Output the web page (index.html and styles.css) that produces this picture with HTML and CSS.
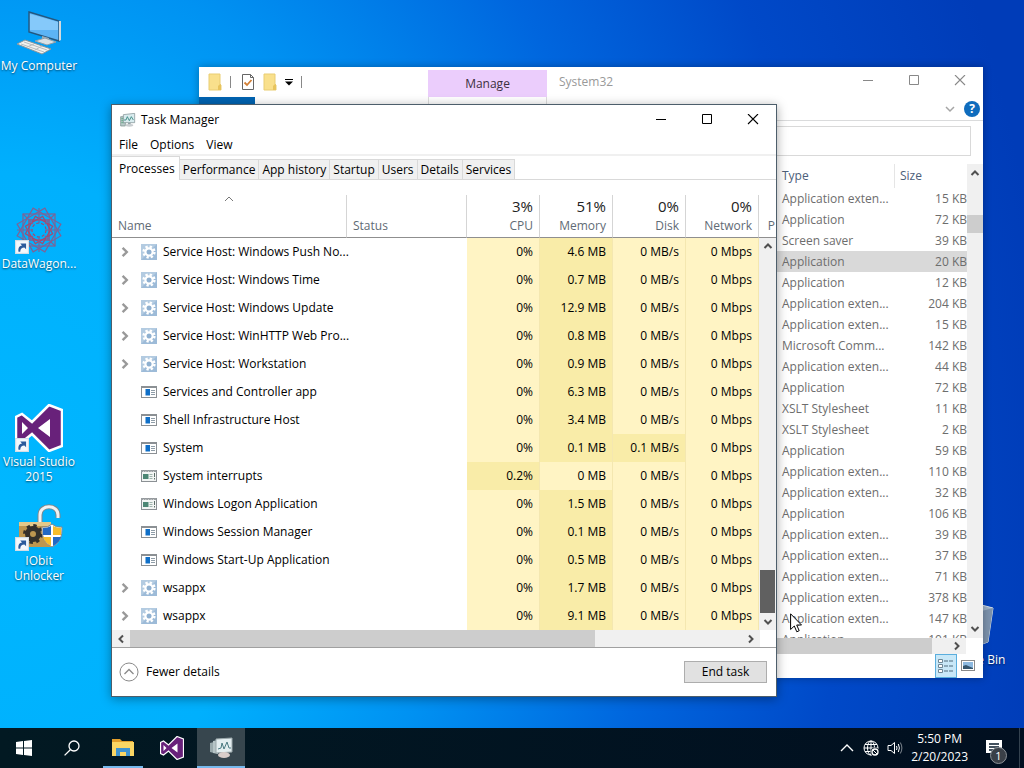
FILE: index.html
```html
<!DOCTYPE html>
<html lang="en">

<head>
    <meta charset="UTF-8">
    <meta name="viewport" content="width=device-width, initial-scale=1.0">
    <title>Desktop</title>
    <link rel="stylesheet" href="styles.css">
</head>

<body>
    <!-- shared icons -->
    <svg class="defs" aria-hidden="true">
        <symbol id="arrow-up" viewBox="0 0 10 10"><path d="M1.500 7L5 3.500L8.500 7" fill="none" stroke="currentColor" stroke-width="2"/></symbol>
        <symbol id="arrow-down" viewBox="0 0 10 10"><path d="M1.500 3L5 6.500L8.500 3" fill="none" stroke="currentColor" stroke-width="2"/></symbol>
        <symbol id="arrow-left" viewBox="0 0 10 10"><path d="M7 1.500L3.500 5L7 8.500" fill="none" stroke="currentColor" stroke-width="2"/></symbol>
        <symbol id="arrow-right" viewBox="0 0 10 10"><path d="M3 1.500L6.500 5L3 8.500" fill="none" stroke="currentColor" stroke-width="2"/></symbol>
        <symbol id="minimize" viewBox="0 0 12 12"><path d="M1 5.500H11" stroke="currentColor"/></symbol>
        <symbol id="maximize" viewBox="0 0 12 12"><path d="M1.500 .5H10.500V9.500H1.500Z" fill="none" stroke="currentColor"/></symbol>
        <symbol id="close" viewBox="0 0 12 12"><path d="M1 0L11 10M11 0L1 10" stroke="currentColor" stroke-width="1.100"/></symbol>
        <symbol id="gear" viewBox="0 0 16 16">
            <rect width="16" height="16" fill="#9dbbd8"/>
            <path d="M0 0H16L0 16Z" fill="#b3cbe1"/>
            <circle cx="8" cy="8" r="5.400" fill="none" stroke="#fff" stroke-width="2.400" stroke-dasharray="2.300 1.940"/>
            <circle cx="8" cy="8" r="3.600" fill="none" stroke="#fff" stroke-width="2.200"/>
            <circle cx="8" cy="8" r="2.300" fill="#8fb0d0"/>
        </symbol>
        <symbol id="app" viewBox="0 0 16 16">
            <rect x=".5" y="2.500" width="15" height="11" fill="#fff" stroke="#8b9094"/>
            <path d="M0 3H16" stroke="#8b9094" stroke-width="2"/>
            <rect x="4.500" y="5" width="4.500" height="6.500" fill="#0f6fc8"/>
            <path d="M10 6.500H14M10 8.500H14M10 10.500H14" stroke="#8f9da8"/>
        </symbol>
        <symbol id="console" viewBox="0 0 16 16">
            <rect x=".5" y="2.500" width="15" height="11" fill="#f3f5f4" stroke="#8b9094"/>
            <path d="M0 3H16" stroke="#9a9fa2" stroke-width="2" stroke-dasharray="2 .6"/>
            <rect x="2" y="6" width="5.500" height="5" fill="#4c8674"/>
            <path d="M8.500 6.500H11.500M8.500 8.500H11.500M8.500 10.500H11.500" stroke="#9fb5ad"/>
            <path d="M13.500 5V9M13.500 10V11.500" stroke="#5c6e68"/>
        </symbol>
        <symbol id="shortcut" viewBox="0 0 12 12">
            <rect x=".5" y=".5" width="11" height="11" fill="#f4f8fc" stroke="#d3dde6"/>
            <path d="M3 10C2.500 6.500 4 5 6 4.800L4.500 3H9.500V8L8 6.500C6 6.500 4.500 7.500 4.500 10Z" fill="#2b5a9b"/>
        </symbol>
        <symbol id="vs" viewBox="0 0 48 48">
            <path d="M34 1L47 6V42L34 47L17 30L7 38L1 35V13L7 10L17 18Z" fill="#68217a" stroke="#fff" stroke-width="2.500"/>
            <path d="M35 15V33L23 24ZM7 18V30L13 24Z" fill="#fff"/>
        </symbol>
        <symbol id="monitor" viewBox="0 0 24 22">
            <path d="M1 6H8V20H1Z" fill="#b9cbca" stroke="#6f8583"/>
            <path d="M2 9H6M2 12H6M2 15H6" stroke="#3fa06a"/>
            <path d="M5 3L22 1V15H5Z" fill="#d9ecef" stroke="#78898d"/>
            <path d="M6 11L9 11L11 6L14 12L17 6L20 11" fill="none" stroke="#35877f" stroke-width="1.300"/>
            <path d="M12 15H16V18H12Z" fill="#94a3a6"/>
            <ellipse cx="14" cy="19" rx="6" ry="2" fill="#c8cdd0"/>
        </symbol>
        <symbol id="folder" viewBox="0 0 14 18">
            <path d="M1 1H12V11L13 12V17H1Z" fill="#f9e08c" stroke="#e9cd72"/>
            <path d="M12 11L10 13V17H13V12Z" fill="#e8c45d"/>
        </symbol>
    </svg>

    <main class="desktop">
        <a class="shortcut row-1" href="#">
            <svg class="shortcut-icon" viewBox="0 0 48 48">
                <path d="M14 4L44 13V33L14 24Z" fill="#5cb4f5" stroke="#24577f" stroke-width="1.400"/>
                <path d="M15 6L43 14V22L15 22Z" fill="#85c9fa"/>
                <path d="M44 13L46 13V32L44 33Z" fill="#d3dade"/>
                <path d="M27 28L34 30V34L27 33Z" fill="#9fb0ba"/>
                <path d="M20 33L30 30L41 34L32 37Z" fill="#d9e1e6" stroke="#8fa0aa"/>
                <path d="M2 36L10 32L36 41L27 46Z" fill="#f1f1ee" stroke="#8c969c"/>
                <path d="M6 36L29 44M9 34L32 42M12 39L19 36M20 42L27 38" stroke="#b7bcbf"/>
            </svg>
            <span>My Computer</span>
        </a>
        <a class="shortcut row-3" href="#">
            <svg class="shortcut-icon" viewBox="0 0 48 48">
                <g fill="none" stroke="#7d6396" stroke-width="1.200">
                    <rect x="8" y="8" width="32" height="32"/>
                    <rect x="8" y="8" width="32" height="32" transform="rotate(30 24 24)"/>
                    <rect x="8" y="8" width="32" height="32" transform="rotate(60 24 24)"/>
                    <rect x="14" y="14" width="20" height="20" stroke="#a34a70"/>
                    <rect x="14" y="14" width="20" height="20" transform="rotate(30 24 24)" stroke="#a34a70"/>
                    <rect x="14" y="14" width="20" height="20" transform="rotate(60 24 24)" stroke="#a34a70"/>
                    <circle cx="24" cy="24" r="7" stroke="#a34a70" stroke-dasharray="3 2"/>
                    <path d="M24 2V17M24 31V46M2 24H17M31 24H46M8 8L18 18M40 8L30 18M8 40L18 30M40 40L30 30"/>
                </g>
                <use href="#shortcut" x="0" y="34" width="14" height="14"/>
            </svg>
            <span>DataWagon...</span>
        </a>
        <a class="shortcut row-5" href="#">
            <svg class="shortcut-icon" viewBox="0 0 48 48">
                <use href="#vs" width="48" height="48"/>
                <use href="#shortcut" x="0" y="34" width="14" height="14"/>
            </svg>
            <span>Visual Studio 2015</span>
        </a>
        <a class="shortcut row-6" href="#">
            <svg class="shortcut-icon" viewBox="0 0 48 48">
                <path d="M25 20V12C25 1 43 1 43 12V15" fill="none" stroke="#7f8589" stroke-width="5"/>
                <path d="M25 20V12C25 1 43 1 43 12V15" fill="none" stroke="#f0f2f3" stroke-width="3"/>
                <rect x="4" y="19" width="32" height="25" fill="#bd9650"/>
                <path d="M4 19H36V23H4Z" fill="#e4c98a"/>
                <circle cx="18" cy="31" r="8.500" fill="none" stroke="#34302b" stroke-width="3" stroke-dasharray="3.340 3.340"/>
                <circle cx="18" cy="31" r="5.500" fill="none" stroke="#34302b" stroke-width="5"/>
                <path d="M27 24Q33 25 37 21Q41 25 47 24Q48 39 37 44Q26 39 27 24Z" fill="#fff" stroke="#888"/>
                <path d="M28 25Q33 25 36 23V32H28ZM38 34H46Q44 40 38 43Z" fill="#2369c4"/>
                <path d="M38 23Q42 25 46 25V32H38ZM28 34H36V43Q30 40 28 34Z" fill="#f6bd2c"/>
                <use href="#shortcut" x="0" y="34" width="14" height="14"/>
            </svg>
            <span>IObit Unlocker</span>
        </a>
        <a class="shortcut row-7 last" href="#">
            <svg class="shortcut-icon" viewBox="0 0 48 48">
                <path d="M6 5L24 1L43 6L38 40L27 44L11 40Z" fill="#9fb3c8" stroke="#d5dfe8"/>
                <path d="M28 10L43 6L38 40L27 44Z" fill="#7d93ad"/>
            </svg>
            <span>Recycle Bin</span>
        </a>
    </main>

    <section class="window explorer">
        <header class="explorer-title">
            <div class="quick">
                <svg class="icon-14" viewBox="0 0 14 18"><use href="#folder"/></svg>
                <i></i>
                <svg class="icon-14 gap" viewBox="0 0 14 18">
                    <path d="M1.500 1.500H9.500L12.500 4.500V16.500H1.500Z" fill="#fff" stroke="#666"/>
                    <path d="M9.500 1.500V4.500H12.500" fill="none" stroke="#666"/>
                    <path d="M3.500 9.500L6 12L10.500 7" fill="none" stroke="#d27f35" stroke-width="1.800"/>
                </svg>
                <svg class="icon-14 gap" viewBox="0 0 14 18"><use href="#folder"/></svg>
                <svg class="icon-8 gap" viewBox="0 0 8 8"><path d="M0 1.500H8" stroke="#000"/><path d="M0 3.500H8L4 7.500Z"/></svg>
                <i></i>
            </div>
            <div class="manage">Manage</div>
            <h2>System32</h2>
            <div class="controls">
                <button aria-label="Minimize"><svg><use href="#minimize"/></svg></button>
                <button aria-label="Maximize"><svg><use href="#maximize"/></svg></button>
                <button aria-label="Close"><svg><use href="#close"/></svg></button>
            </div>
        </header>
        <div class="ribbon">
            <div class="file-tab"></div>
            <div class="manage-tab"></div>
            <svg class="icon-10" viewBox="0 0 10 10"><path d="M1 3L5 7L9 3" fill="none" stroke="#a5a5a5" stroke-width="1.500"/></svg>
            <button class="help" aria-label="Help">?</button>
        </div>
        <div class="address"><input type="text" aria-label="Search"></div>
        <div class="listing">
            <div class="files">
                <table>
                    <thead>
                        <tr><th class="col-rest"></th><th class="col-type">Type</th><th class="col-size">Size</th></tr>
                    </thead>
                    <tbody>
                        <tr><td></td><td>Application exten...</td><td>15 KB</td></tr>
                        <tr><td></td><td>Application</td><td>72 KB</td></tr>
                        <tr><td></td><td>Screen saver</td><td>39 KB</td></tr>
                        <tr class="selected"><td></td><td>Application</td><td>20 KB</td></tr>
                        <tr><td></td><td>Application</td><td>12 KB</td></tr>
                        <tr><td></td><td>Application exten...</td><td>204 KB</td></tr>
                        <tr><td></td><td>Application exten...</td><td>15 KB</td></tr>
                        <tr><td></td><td>Microsoft Comm...</td><td>142 KB</td></tr>
                        <tr><td></td><td>Application exten...</td><td>44 KB</td></tr>
                        <tr><td></td><td>Application</td><td>72 KB</td></tr>
                        <tr><td></td><td>XSLT Stylesheet</td><td>11 KB</td></tr>
                        <tr><td></td><td>XSLT Stylesheet</td><td>2 KB</td></tr>
                        <tr><td></td><td>Application</td><td>59 KB</td></tr>
                        <tr><td></td><td>Application exten...</td><td>110 KB</td></tr>
                        <tr><td></td><td>Application exten...</td><td>32 KB</td></tr>
                        <tr><td></td><td>Application</td><td>106 KB</td></tr>
                        <tr><td></td><td>Application exten...</td><td>39 KB</td></tr>
                        <tr><td></td><td>Application exten...</td><td>37 KB</td></tr>
                        <tr><td></td><td>Application exten...</td><td>71 KB</td></tr>
                        <tr><td></td><td>Application exten...</td><td>378 KB</td></tr>
                        <tr><td></td><td>Application exten...</td><td>147 KB</td></tr>
                        <tr><td></td><td>Application</td><td>101 KB</td></tr>
                    </tbody>
                </table>
            </div>
            <div class="vscroll">
                <svg class="icon-10"><use href="#arrow-up"/></svg>
                <div class="track"><div class="thumb"></div></div>
                <svg class="icon-10"><use href="#arrow-down"/></svg>
            </div>
        </div>
        <div class="hscroll">
            <div class="thumb"></div>
            <svg class="icon-10"><use href="#arrow-right"/></svg>
        </div>
        <footer class="views">
            <button class="active" aria-label="Details view">
                <svg viewBox="0 0 16 16"><path d="M.5 1.500H4.500V4.500H.5ZM.5 6.500H4.500V9.500H.5ZM.5 11.500H4.500V14.500H.5Z" fill="#fff" stroke="#6f8796"/><path d="M6 3H10M11 3H15M6 8H10M11 8H15M6 13H10M11 13H15" stroke="#4f6b7c"/></svg>
            </button>
            <button aria-label="Large icons view">
                <svg viewBox="0 0 16 16"><rect x="1.500" y="2.500" width="13" height="10" fill="#fff" stroke="#8a8a8a"/><rect x="3" y="4" width="10" height="7" fill="#8db9e0"/><path d="M3 11V8L6 7L13 10V11Z" fill="#35566f"/></svg>
            </button>
        </footer>
    </section>

    <section class="window task-manager">
        <header class="task-title">
            <svg class="icon-16" viewBox="0 0 24 22"><use href="#monitor"/></svg>
            <h1>Task Manager</h1>
            <div class="controls">
                <button aria-label="Minimize"><svg><use href="#minimize"/></svg></button>
                <button aria-label="Maximize"><svg><use href="#maximize"/></svg></button>
                <button aria-label="Close"><svg><use href="#close"/></svg></button>
            </div>
        </header>
        <nav class="menu">
            <button>File</button>
            <button>Options</button>
            <button>View</button>
        </nav>
        <div class="tabs">
            <button class="current">Processes</button>
            <button>Performance</button>
            <button>App history</button>
            <button>Startup</button>
            <button>Users</button>
            <button>Details</button>
            <button>Services</button>
        </div>
        <table class="processes">
            <thead>
                <tr>
                    <th class="col-name"><svg class="sort" viewBox="0 0 10 6"><path d="M1 5L5 1L9 5" fill="none" stroke="#777"/></svg>Name</th>
                    <th class="col-status">Status</th>
                    <th class="col-value"><b>3%</b>CPU</th>
                    <th class="col-value"><b>51%</b>Memory</th>
                    <th class="col-value"><b>0%</b>Disk</th>
                    <th class="col-value"><b>0%</b>Network</th>
                    <th class="col-scroll">P</th>
                </tr>
            </thead>
            <tbody>
                <tr>
                    <td><div class="name"><svg class="expand"><use href="#arrow-right"/></svg><svg class="icon-16"><use href="#gear"/></svg>Service Host: Windows Push No...</div></td>
                    <td></td><td>0%</td><td class="warm">4.6 MB</td><td>0 MB/s</td><td>0 Mbps</td>
                    <td class="scroll-cell" rowspan="14">
                        <div class="vscroll">
                            <svg class="icon-10"><use href="#arrow-up"/></svg>
                            <div class="track"><div class="thumb"></div></div>
                            <svg class="icon-10"><use href="#arrow-down"/></svg>
                        </div>
                    </td>
                </tr>
                <tr>
                    <td><div class="name"><svg class="expand"><use href="#arrow-right"/></svg><svg class="icon-16"><use href="#gear"/></svg>Service Host: Windows Time</div></td>
                    <td></td><td>0%</td><td class="warm">0.7 MB</td><td>0 MB/s</td><td>0 Mbps</td>
                </tr>
                <tr>
                    <td><div class="name"><svg class="expand"><use href="#arrow-right"/></svg><svg class="icon-16"><use href="#gear"/></svg>Service Host: Windows Update</div></td>
                    <td></td><td>0%</td><td class="warm">12.9 MB</td><td>0 MB/s</td><td>0 Mbps</td>
                </tr>
                <tr>
                    <td><div class="name"><svg class="expand"><use href="#arrow-right"/></svg><svg class="icon-16"><use href="#gear"/></svg>Service Host: WinHTTP Web Pro...</div></td>
                    <td></td><td>0%</td><td class="warm">0.8 MB</td><td>0 MB/s</td><td>0 Mbps</td>
                </tr>
                <tr>
                    <td><div class="name"><svg class="expand"><use href="#arrow-right"/></svg><svg class="icon-16"><use href="#gear"/></svg>Service Host: Workstation</div></td>
                    <td></td><td>0%</td><td class="warm">0.9 MB</td><td>0 MB/s</td><td>0 Mbps</td>
                </tr>
                <tr>
                    <td><div class="name"><svg class="expand"></svg><svg class="icon-16"><use href="#app"/></svg>Services and Controller app</div></td>
                    <td></td><td>0%</td><td class="warm">6.3 MB</td><td>0 MB/s</td><td>0 Mbps</td>
                </tr>
                <tr>
                    <td><div class="name"><svg class="expand"></svg><svg class="icon-16"><use href="#app"/></svg>Shell Infrastructure Host</div></td>
                    <td></td><td>0%</td><td class="warm">3.4 MB</td><td>0 MB/s</td><td>0 Mbps</td>
                </tr>
                <tr>
                    <td><div class="name"><svg class="expand"></svg><svg class="icon-16"><use href="#app"/></svg>System</div></td>
                    <td></td><td>0%</td><td class="warm">0.1 MB</td><td class="warm">0.1 MB/s</td><td>0 Mbps</td>
                </tr>
                <tr>
                    <td><div class="name"><svg class="expand"></svg><svg class="icon-16"><use href="#console"/></svg>System interrupts</div></td>
                    <td></td><td class="warm">0.2%</td><td>0 MB</td><td>0 MB/s</td><td>0 Mbps</td>
                </tr>
                <tr>
                    <td><div class="name"><svg class="expand"></svg><svg class="icon-16"><use href="#console"/></svg>Windows Logon Application</div></td>
                    <td></td><td>0%</td><td class="warm">1.5 MB</td><td>0 MB/s</td><td>0 Mbps</td>
                </tr>
                <tr>
                    <td><div class="name"><svg class="expand"></svg><svg class="icon-16"><use href="#app"/></svg>Windows Session Manager</div></td>
                    <td></td><td>0%</td><td class="warm">0.1 MB</td><td>0 MB/s</td><td>0 Mbps</td>
                </tr>
                <tr>
                    <td><div class="name"><svg class="expand"></svg><svg class="icon-16"><use href="#app"/></svg>Windows Start-Up Application</div></td>
                    <td></td><td>0%</td><td class="warm">0.5 MB</td><td>0 MB/s</td><td>0 Mbps</td>
                </tr>
                <tr>
                    <td><div class="name"><svg class="expand"><use href="#arrow-right"/></svg><svg class="icon-16"><use href="#gear"/></svg>wsappx</div></td>
                    <td></td><td>0%</td><td class="warm">1.7 MB</td><td>0 MB/s</td><td>0 Mbps</td>
                </tr>
                <tr>
                    <td><div class="name"><svg class="expand"><use href="#arrow-right"/></svg><svg class="icon-16"><use href="#gear"/></svg>wsappx</div></td>
                    <td></td><td>0%</td><td class="warm">9.1 MB</td><td>0 MB/s</td><td>0 Mbps</td>
                </tr>
            </tbody>
        </table>
        <div class="hscroll">
            <svg class="icon-10"><use href="#arrow-left"/></svg>
            <div class="track"><div class="thumb"></div></div>
            <svg class="icon-10"><use href="#arrow-right"/></svg>
        </div>
        <footer class="task-footer">
            <button class="fewer">
                <svg viewBox="0 0 20 20"><circle cx="10" cy="10" r="9" fill="none" stroke="#8a8a8a"/><path d="M5.500 12L10 7.500L14.500 12" fill="none" stroke="#8a8a8a" stroke-width="1.300"/></svg>
                Fewer details
            </button>
            <button class="end-task">End task</button>
        </footer>
    </section>

    <footer class="taskbar">
        <button aria-label="Start"><svg class="icon-16" viewBox="0 0 16 16"><path d="M0 2L7 1V7.500H0ZM8 1L16 0V7.500H8ZM0 8.500H7V15L0 14ZM8 8.500H16V16L8 15Z" fill="#fff"/></svg></button>
        <button aria-label="Search"><svg class="icon-16" viewBox="0 0 16 16"><circle cx="10" cy="6" r="5" fill="none" stroke="#fff" stroke-width="1.300"/><path d="M6.300 9.700L.6 15.400" stroke="#fff" stroke-width="1.300"/></svg></button>
        <div class="apps">
            <button class="running" aria-label="File Explorer"><svg class="icon-24" viewBox="0 0 24 24"><path d="M1 3H9L11 5H22V8H1Z" fill="#e39f2b"/><path d="M1 6H23V20H1Z" fill="#fbd663"/><path d="M5 20V12H19V20H15V16H9V20Z" fill="#3f93cf"/></svg></button>
            <button aria-label="Visual Studio"><svg class="icon-24" viewBox="0 0 48 48"><use href="#vs"/></svg></button>
            <button class="running focused" aria-label="Task Manager"><svg class="icon-24" viewBox="0 0 24 24"><path d="M1 7L5 6V17L1 16Z" fill="#99a9ac"/><path d="M4 5L9 4V18L4 17Z" fill="#b6c4c6"/><path d="M7 3L23 2V16L7 17Z" fill="#e4eef0" stroke="#9aa7aa"/><path d="M9 13L12 12L13 7L15 13L18 6L20 12H22" fill="none" stroke="#4c7b82"/><ellipse cx="15" cy="19" rx="6" ry="3" fill="#d9cdca"/></svg></button>
        </div>
        <div class="tray">
            <svg class="icon-16" viewBox="0 0 16 16"><path d="M2 11L8 5L14 11" fill="none" stroke="#fff" stroke-width="1.400"/></svg>
            <svg class="icon-16" viewBox="0 0 16 16"><g fill="none" stroke="#fff"><circle cx="8" cy="8" r="7"/><ellipse cx="8" cy="8" rx="3.500" ry="7"/><path d="M8 1V15M1 8H15M2 4.500H14M2 11.500H14"/></g><circle cx="12" cy="12" r="4.500" fill="#020f1d"/><circle cx="12" cy="12" r="3" fill="none" stroke="#fff" stroke-width="1.300"/><path d="M10 10L14 14" stroke="#fff"/></svg>
            <svg class="icon-16" viewBox="0 0 16 16"><g fill="none" stroke="#fff"><path d="M1 5.500H4L7.500 2.500V13.500L4 10.500H1Z"/><path d="M9.500 6Q10.500 8 9.500 10M11.300 4Q13.500 8 11.300 12"/><path d="M13.300 2.500Q16.500 8 13.300 13.500" opacity=".5"/></g></svg>
            <div class="clock"><span>5:50 PM</span><span>2/20/2023</span></div>
            <button class="notices" aria-label="Notifications">
                <svg viewBox="0 0 16 16"><path d="M0 0H16V13H9L6 16V13H0Z" fill="#fff"/><path d="M3 4H13M3 7H13M3 10H10" stroke="#06182a" stroke-width="1.300"/></svg>
                <span class="badge">1</span>
            </button>
        </div>
    </footer>

    <svg class="cursor" viewBox="0 0 12 20"><path d="M.6 .8V16.500L4.300 13L6.800 18.800L9.200 17.700L6.700 12H11.500Z" fill="#fff" stroke="#000"/></svg>
</body>

</html>
```
FILE: styles.css
```css
* {
    box-sizing: border-box;
}

body {
    margin: 0;
    height: 100vh;
    display: flex;
    flex-direction: column;
    overflow: hidden;
    font-family: "Open Sans", "Noto Sans", sans-serif;
    font-size: 12px;
    line-height: 16px;
    color: #000;
    background: radial-gradient(103% 170% at 0% 65%, #00b7ff 0%, #00b0fd 25%, #0092f2 42%, #0066de 62%, #0049c8 80%, #003cb8 100%);
}

button,
input {
    font: inherit;
    color: inherit;
    padding: 0;
    border: none;
    background: none;
}

h1,
h2 {
    margin: 0;
    font-size: 12px;
    font-weight: normal;
}

svg {
    display: block;
    flex: none;
}

table {
    width: 100%;
    table-layout: fixed;
    border-collapse: separate;
    border-spacing: 0;
}

th,
td {
    padding: 0;
    font-weight: normal;
    text-align: left;
    white-space: nowrap;
}

.defs {
    position: absolute;
    width: 0;
    height: 0;
}

.icon-8 {
    width: 8px;
    height: 8px;
}

.icon-10 {
    width: 10px;
    height: 10px;
}

.icon-14 {
    width: 14px;
    height: 18px;
}

.icon-16 {
    width: 16px;
    height: 16px;
}

.icon-24 {
    width: 24px;
    height: 24px;
}

/* Desktop shortcuts */
.desktop {
    flex: 1;
    min-height: 0;
    display: grid;
    grid-template-columns: 78px 1fr 100px;
    grid-auto-rows: 99px;
}

.shortcut {
    grid-column: 1;
    display: flex;
    flex-direction: column;
    align-items: center;
    gap: 2px;
    padding-top: 8px;
    color: #fff;
    line-height: 15px;
    text-align: center;
    text-decoration: none;
    text-shadow: 0 1px 2px rgba(0, 0, 0, 0.6);
}

.shortcut-icon {
    width: 48px;
    height: 48px;
}

.row-1 { grid-row: 1; }
.row-3 { grid-row: 3; }
.row-5 { grid-row: 5; }
.row-6 { grid-row: 6; }
.row-7 { grid-row: 7; }

.last {
    grid-column: 3;
}

/* Windows */
.window {
    position: absolute;
    display: flex;
    flex-direction: column;
    background: #fff;
}

.controls {
    display: flex;
    margin-left: auto;
}

.controls button {
    width: 46px;
    height: 28px;
    display: flex;
    align-items: center;
    justify-content: center;
}

.controls svg {
    width: 12px;
    height: 12px;
}

.vscroll {
    display: flex;
    flex-direction: column;
    align-items: center;
    padding: 4px 0;
    background: #f0f0f0;
    color: #505050;
}

.hscroll {
    height: 17px;
    display: flex;
    align-items: center;
    background: #f0f0f0;
    color: #505050;
}

.track {
    flex: 1;
    display: flex;
}

.thumb {
    background: #cdcdcd;
}

/* File Explorer */
.explorer {
    top: 67px;
    left: 199px;
    right: 41px;
    color: #6d6d6d;
    box-shadow: 0 0 8px rgba(0, 0, 0, 0.3);
}

.explorer-title {
    height: 30px;
    display: flex;
}

.explorer-title .controls {
    color: #888;
}

.quick {
    width: 229px;
    display: flex;
    align-items: center;
    padding-left: 9px;
}

.quick i {
    width: 1px;
    height: 12px;
    margin-left: 8px;
    background: #888;
}

.quick .gap {
    margin-left: 8px;
}

.quick .gap:nth-child(3) {
    margin-left: 10px;
}

.manage {
    width: 119px;
    margin-top: 3px;
    line-height: 28px;
    text-align: center;
    color: #3c3040;
    background: #ebcdfc;
}

.explorer-title h2 {
    margin-left: 12px;
    line-height: 30px;
    color: #999;
}

.ribbon {
    height: 24px;
    display: flex;
    align-items: center;
    padding-right: 3px;
    border-bottom: 1px solid #dadbdc;
}

.file-tab {
    align-self: stretch;
    width: 56px;
    margin-right: 173px;
    background: #0063b1;
}

.manage-tab {
    align-self: stretch;
    width: 119px;
    margin-right: auto;
    border: 1px solid #ddd;
    border-width: 0 1px;
}

.help {
    width: 16px;
    height: 16px;
    margin-left: 9px;
    border-radius: 50%;
    color: #fff;
    font-weight: bold;
    line-height: 16px;
    background: #0f6cbd;
}

.address {
    padding: 5px 12px 8px 400px;
}

.address input {
    display: block;
    width: 100%;
    height: 30px;
    border: 1px solid #d9d9d9;
}

.listing {
    height: 474px;
    display: flex;
}

.files {
    flex: 1;
    overflow: hidden;
}

.files .col-type {
    width: 118px;
}

.files .col-size {
    width: 72px;
}

.files th {
    height: 24px;
    color: #4c607a;
    border-right: 1px solid #e5e5e5;
}

.files th:last-child {
    border-right: none;
}

.files th,
.files td {
    padding-left: 5px;
}

.files td {
    height: 21px;
}

.files td:last-child {
    text-align: right;
}

.files .selected td {
    background: #d9d9d9;
}

.explorer .vscroll {
    width: 16px;
}

.explorer .vscroll .track {
    padding-top: 37px;
}

.explorer .vscroll .thumb {
    width: 16px;
    height: 18px;
}

.explorer .hscroll {
    height: 16px;
    margin-right: 17px;
    padding-right: 4px;
}

.explorer .hscroll .thumb {
    flex: 1;
    align-self: stretch;
    margin-right: 20px;
}

.views {
    display: flex;
    justify-content: flex-end;
    padding-right: 4px;
}

.views button {
    width: 22px;
    height: 24px;
    display: flex;
    align-items: center;
    justify-content: center;
}

.views svg {
    width: 16px;
    height: 16px;
}

.views .active {
    border: 1px solid #5aaede;
    background: #c8e8f8;
}

/* Task Manager */
.task-manager {
    top: 104px;
    left: 111px;
    right: 247px;
    border: 1px solid #4d5e6b;
    box-shadow: 0 2px 10px rgba(0, 0, 0, 0.35);
}

.task-title {
    height: 30px;
    display: flex;
    align-items: center;
    padding-left: 8px;
}

.task-title h1 {
    margin-left: 5px;
}

.menu {
    height: 21px;
    display: flex;
    align-items: center;
    gap: 12px;
    padding-left: 7px;
    border-bottom: 2px solid #f0f0f0;
}

.tabs {
    display: flex;
    align-items: flex-end;
    height: 24px;
    margin-bottom: 15px;
    background: linear-gradient(#d9d9d9, #d9d9d9) 0 100% / 100% 1px no-repeat;
}

.tabs button {
    height: 21px;
    padding: 0 3px;
    border: 1px solid #d9d9d9;
    border-left: none;
    background: #f0f0f0;
}

.tabs .current {
    height: 24px;
    padding: 0 4px 0 7px;
    border-bottom: none;
    background: #fff;
}

.processes th {
    height: 43px;
    padding: 0 6px 3px;
    vertical-align: bottom;
    color: #5f6b75;
    border-right: 1px solid #d5d5d5;
    border-bottom: 1px solid #8f8f8f;
}

.processes .sort {
    width: 10px;
    height: 6px;
    margin: 0 auto 16px;
}

.processes .col-status {
    width: 120px;
}

.processes .col-value {
    width: 73px;
    text-align: right;
}

.processes .col-value b {
    display: block;
    margin-bottom: 2px;
    font-size: 15px;
    font-weight: normal;
    line-height: 20px;
    color: #222;
}

.processes .col-scroll {
    width: 17px;
    border-right: none;
    text-align: right;
    padding-right: 1px;
}

.processes td {
    height: 28px;
}

.processes td:nth-child(n+3) {
    padding-right: 6px;
    text-align: right;
    background: #fff4c4;
    border-right: 1px solid #f4e7b0;
}

.processes td.warm {
    background: #f9eca8;
}

.processes td.scroll-cell {
    height: 1px;
    padding: 0;
    border: none;
}

.name {
    display: flex;
    align-items: center;
    padding-left: 7px;
}

.name .icon-16 {
    margin-right: 6px;
}

.expand {
    width: 12px;
    height: 12px;
    margin-right: 10px;
    color: #999;
}

.task-manager .vscroll {
    height: 100%;
    padding: 3px 0;
}

.task-manager .vscroll .track {
    align-items: flex-end;
    padding-bottom: 4px;
}

.task-manager .vscroll .thumb {
    width: 15px;
    height: 43px;
    background: #606060;
}

.task-manager .hscroll {
    margin-right: 16px;
    padding: 0 4px;
}

.task-manager .hscroll .track {
    align-self: stretch;
    margin: 0 4px;
}

.task-manager .hscroll .thumb {
    width: 76%;
}

.task-footer {
    height: 49px;
    display: flex;
    align-items: center;
    justify-content: space-between;
    padding: 0 9px 0 7px;
    border-top: 1px solid #a0a0a0;
}

.fewer {
    display: flex;
    align-items: center;
    gap: 7px;
}

.fewer svg {
    width: 20px;
    height: 20px;
}

.end-task {
    width: 83px;
    height: 22px;
    border: 1px solid #adadad;
    background: #e1e1e1;
}

/* Taskbar */
.taskbar {
    height: 40px;
    display: flex;
    color: #fff;
    background: linear-gradient(to right, #021922, #010f20);
}

.taskbar button {
    width: 48px;
    display: flex;
    align-items: center;
    justify-content: center;
}

.apps {
    display: flex;
    gap: 1px;
    margin-left: 3px;
}

.taskbar .running {
    background: linear-gradient(#76b9ed, #76b9ed) 50% 100% / 40px 2px no-repeat;
}

.taskbar .focused {
    background: linear-gradient(#76b9ed, #76b9ed) 50% 100% / 48px 2px no-repeat #37464e;
}

.tray {
    display: flex;
    align-items: center;
    gap: 8px;
    margin-left: auto;
    padding-right: 4px;
}

.clock {
    display: flex;
    flex-direction: column;
    align-items: center;
    line-height: 18px;
}

.tray .notices {
    position: relative;
    width: 44px;
    height: 40px;
    padding-right: 8px;
    border-right: 1px solid #34424f;
}

.notices svg {
    width: 16px;
    height: 16px;
}

.badge {
    position: absolute;
    right: 12px;
    bottom: 4px;
    width: 17px;
    height: 17px;
    border: 1px solid #8c9298;
    border-radius: 50%;
    font-size: 11px;
    line-height: 15px;
    background: #3a4048;
}

.cursor {
    position: absolute;
    top: 613px;
    left: 790px;
    width: 12px;
    height: 20px;
}
```
